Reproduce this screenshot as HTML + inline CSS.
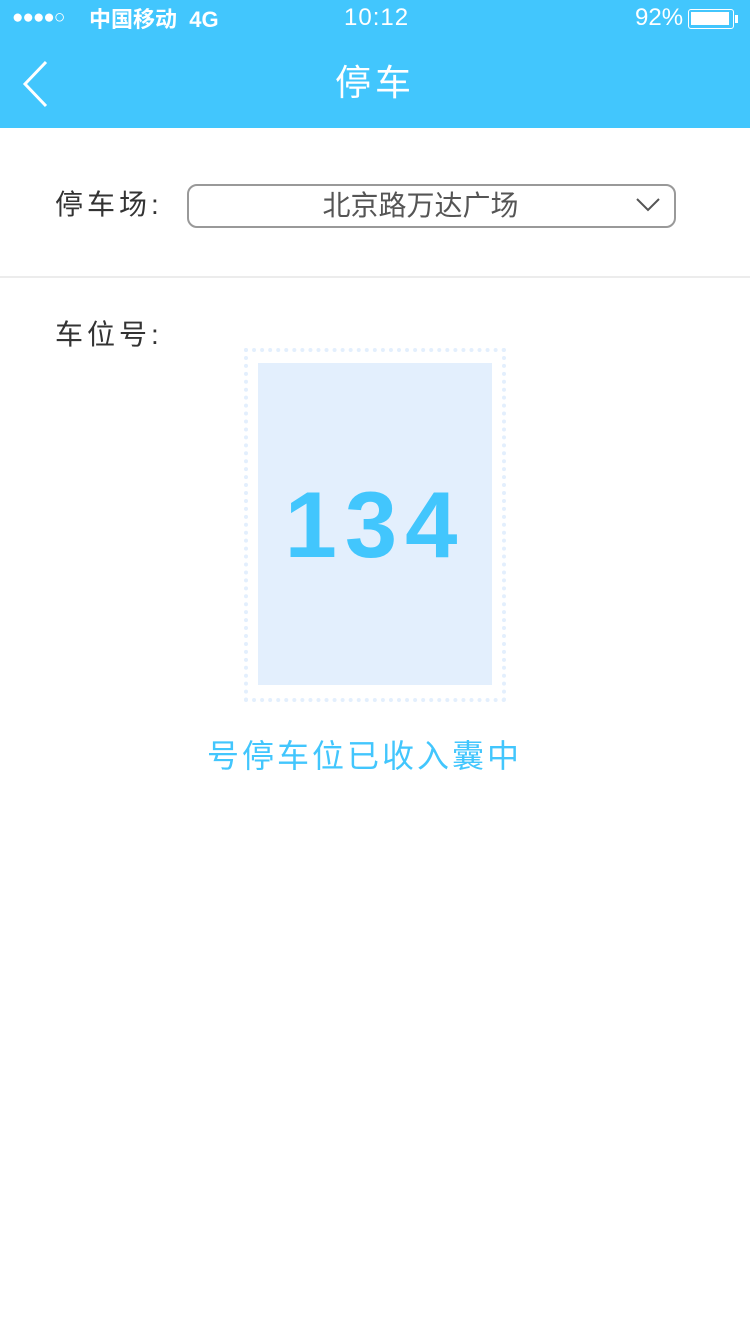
<!DOCTYPE html>
<html><head><meta charset="utf-8"><style>
*{margin:0;padding:0;box-sizing:border-box}
body{width:750px;height:1334px;background:#fff;position:relative;overflow:hidden;font-family:"Liberation Sans","Noto Sans CJK SC",sans-serif}
.hdr{position:absolute;left:0;top:0;width:750px;height:128px;background:#42c6fd;color:#fff}
.abs{position:absolute;white-space:nowrap}
</style></head><body>
<div class="hdr">
 <div class="abs" style="left:12px;top:6px;font-size:19px;line-height:24px;letter-spacing:-1px">●●●●○</div>
 <div class="abs" style="left:89px;top:6px;font-size:22px;line-height:28px;font-weight:bold">中国移动&nbsp; 4G</div>
 <div class="abs" style="left:344px;top:4px;font-size:24px;line-height:28px;letter-spacing:1px">10:12</div>
 <div class="abs" style="left:635px;top:4px;font-size:24px;line-height:28px">92%</div>
 <div class="abs" style="left:688px;top:9px;width:46px;height:20px;border:1.5px solid #fff;border-radius:3px;padding:2px"><div style="width:38px;height:13px;background:#fff"></div></div>
 <div class="abs" style="left:735px;top:15px;width:3px;height:8px;background:#fff"></div>
 <svg class="abs" style="left:20px;top:60px" width="30" height="48"><path d="M26 2 L5 24 L26 46" stroke="#fff" stroke-width="3" fill="none"/></svg>
 <div class="abs" style="left:0;width:750px;text-align:center;top:61px;font-size:36px;line-height:44px;letter-spacing:4px">停车</div>
</div>
<div class="abs" style="left:55px;top:187px;font-size:28px;line-height:36px;color:#333;letter-spacing:4px">停车场:</div>
<div class="abs" style="left:187px;top:184px;width:489px;height:44px;border:2px solid #999;border-radius:10px;text-align:center;font-size:28px;line-height:40px;color:#555;padding-right:22px">北京路万达广场
 <svg style="position:absolute;right:14px;top:12px" width="24" height="14"><path d="M1 1 L12 12 L23 1" stroke="#555" stroke-width="2" fill="none"/></svg></div>
<div class="abs" style="left:0;top:276px;width:750px;height:2px;background:#ececec"></div>
<div class="abs" style="left:55px;top:317px;font-size:28px;line-height:36px;color:#333;letter-spacing:4px">车位号:</div>
<div class="abs" style="left:244px;top:348px;width:262px;height:354px;border:4px dotted #e3effd"></div>
<div class="abs" style="left:258px;top:363px;width:234px;height:322px;background:#e3effd"></div>
<div class="abs" style="left:254px;top:470px;width:234px;text-align:center;font-size:94px;line-height:110px;font-weight:bold;color:#42c6fd;letter-spacing:8px;padding-left:8px">134</div>
<div class="abs" style="left:207px;top:736px;font-size:32px;line-height:40px;color:#42c6fd;letter-spacing:3px">号停车位已收入囊中</div>
</body></html>
